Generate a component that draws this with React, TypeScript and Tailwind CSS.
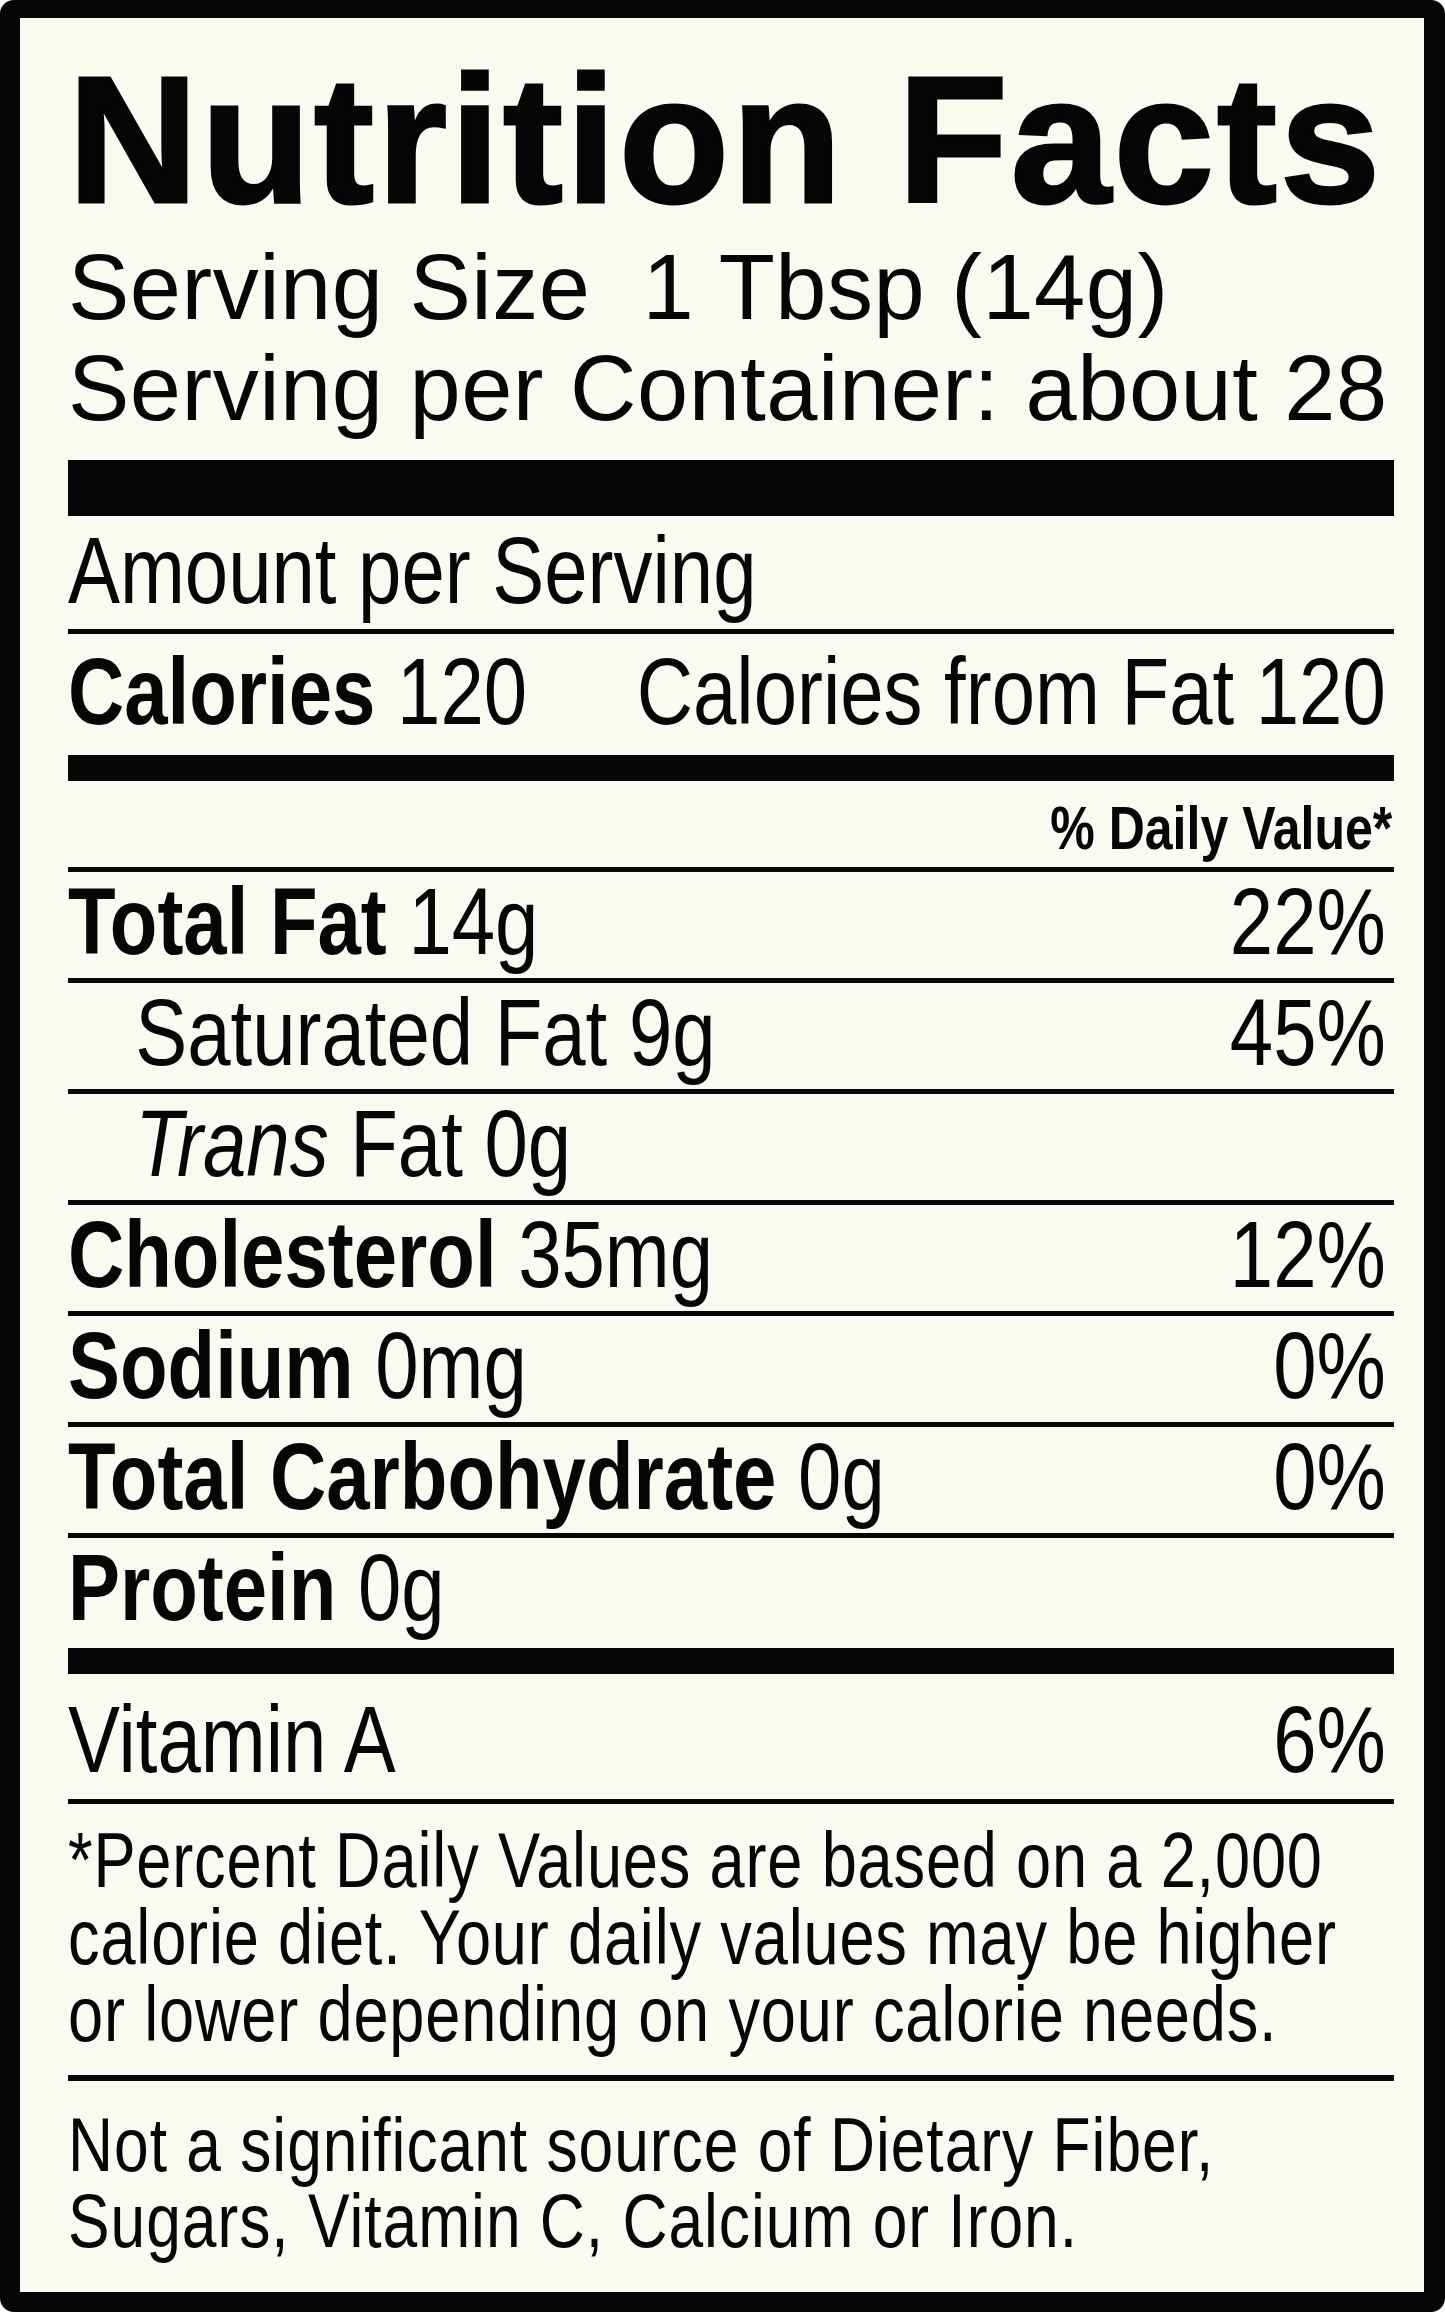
import * as React from "react"

type Nutrient = {
  name: string
  amount: string
  dv?: string
  sub?: boolean
  italic?: string
}

const nutrients: Nutrient[] = [
  { name: "Total Fat", amount: "14g", dv: "22%" },
  { name: "Saturated Fat", amount: "9g", dv: "45%", sub: true },
  { name: "Fat", amount: "0g", sub: true, italic: "Trans" },
  { name: "Cholesterol", amount: "35mg", dv: "12%" },
  { name: "Sodium", amount: "0mg", dv: "0%" },
  { name: "Total Carbohydrate", amount: "0g", dv: "0%" },
  { name: "Protein", amount: "0g" },
]

function Rule() {
  return <div className="h-[5px] bg-[#060606]" />
}

function NutrientRow({ item, last }: { item: Nutrient; last: boolean }) {
  return (
    <div
      className={
        last
          ? "flex justify-between pt-[2px] h-[110px] pr-[10px] text-[95px] leading-[95px] whitespace-nowrap"
          : "flex justify-between pt-[2px] h-[106px] pr-[10px] text-[95px] leading-[95px] whitespace-nowrap"
      }
    >
      {item.sub ? (
        <span className="pl-[82px]">
          {item.italic && <span className="italic">{item.italic} </span>}
          {item.name} {item.amount}
        </span>
      ) : (
        <span>
          <span className="font-bold">{item.name}</span> {item.amount}
        </span>
      )}
      {item.dv && <span>{item.dv}</span>}
    </div>
  )
}

export default function App() {
  return (
    <div className="w-[1445px] h-[2312px] bg-[#060606] rounded-[14px] border-t-[18px] border-l-[20px] border-r-[21px] border-b-[20px] border-[#060606]">
      <div className="h-full overflow-hidden bg-[#fbfaf0] pl-[48px] pr-[30px] text-[#060606] [font-family:'Liberation_Sans',Arial,sans-serif]">
        <h1 className="pt-[32px] text-[180px] leading-[180px] font-bold tracking-[3px] whitespace-nowrap [-webkit-text-stroke:3px_#060606]">
          Nutrition Facts
        </h1>

        <div className="mt-[7px] text-[92px] leading-[101px] tracking-[0.5px] whitespace-pre">
          <div>Serving Size  1 Tbsp (14g)</div>
          <div>Serving per Container: about 28</div>
        </div>

        <div className="mt-[21px] h-[56px] bg-[#060606]" />

        {/* condensed type: the panel is laid out wide, then squeezed horizontally */}
        <div className="w-[1617px] origin-top-left scale-x-[0.82]">
          <div className="pt-[7px] pb-[11px] text-[95px] leading-[95px] whitespace-nowrap">
            Amount per Serving
          </div>
          <Rule />

          <div className="flex justify-between pt-[10px] pb-[16px] pr-[10px] text-[95px] leading-[95px] whitespace-nowrap">
            <span>
              <span className="font-bold">Calories</span> 120
            </span>
            <span>Calories from Fat 120</span>
          </div>

          <div className="h-[26px] bg-[#060606]" />

          <div className="pt-[17px] pb-[8px] pr-[2px] text-right text-[61px] leading-[61px] font-bold whitespace-nowrap">
            % Daily Value*
          </div>
          <Rule />

          {nutrients.map((item, i) => (
            <React.Fragment key={item.name + i}>
              <NutrientRow item={item} last={i === nutrients.length - 1} />
              {i < nutrients.length - 1 && <Rule />}
            </React.Fragment>
          ))}

          <div className="h-[26px] bg-[#060606]" />

          <div className="flex justify-between pt-[18px] pb-[12px] pr-[10px] text-[95px] leading-[95px] whitespace-nowrap">
            <span>Vitamin A</span>
            <span>6%</span>
          </div>
          <Rule />

          <div className="pt-[18px] pb-[22px] text-[77px] leading-[77px] tracking-[1px] whitespace-nowrap">
            <div>*Percent Daily Values are based on a 2,000</div>
            <div>calorie diet. Your daily values may be higher</div>
            <div>or lower depending on your calorie needs.</div>
          </div>
          <div className="h-[6px] bg-[#060606]" />

          <div className="pt-[26px] text-[76px] leading-[76px] tracking-[1.2px] whitespace-nowrap">
            <div>Not a significant source of Dietary Fiber,</div>
            <div>Sugars, Vitamin C, Calcium or Iron.</div>
          </div>
        </div>
      </div>
    </div>
  )
}
